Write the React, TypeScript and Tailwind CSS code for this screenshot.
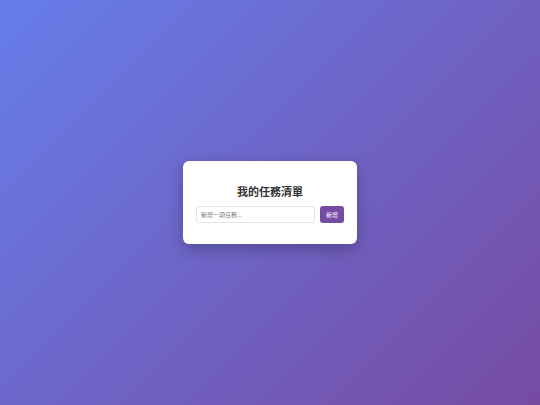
import React, { useState } from 'react'

export default function App() {
  const [text, setText] = useState('')

  return (
    <div
      className="w-[540px] h-[405px] flex items-center justify-center bg-[linear-gradient(135deg,#667eea_0%,#764ba2_100%)]"
      style={{ fontFamily: '"Noto Sans CJK TC", "Noto Sans", sans-serif' }}
    >
      <div className="w-[174px] bg-white rounded-[6px] shadow-[0_5px_15px_rgba(0,0,0,0.25)] px-[13px] pt-[23px] pb-[21px]">
        <h1 className="text-center text-[11px] leading-[15px] font-semibold text-[#333]">我的任務清單</h1>
        <div className="mt-[7px] flex gap-[5px]">
          <input
            value={text}
            onChange={(e) => setText(e.target.value)}
            placeholder="新增一項任務..."
            className="flex-1 min-w-0 h-[17px] px-[4px] text-[6px] text-[#333] placeholder:text-[#777] border border-[#e3e3e3] rounded-[3px] outline-none"
          />
          <button className="w-[24px] h-[17px] rounded-[3px] bg-[#764ba2] text-white text-[6px]">新增</button>
        </div>
      </div>
    </div>
  )
}
